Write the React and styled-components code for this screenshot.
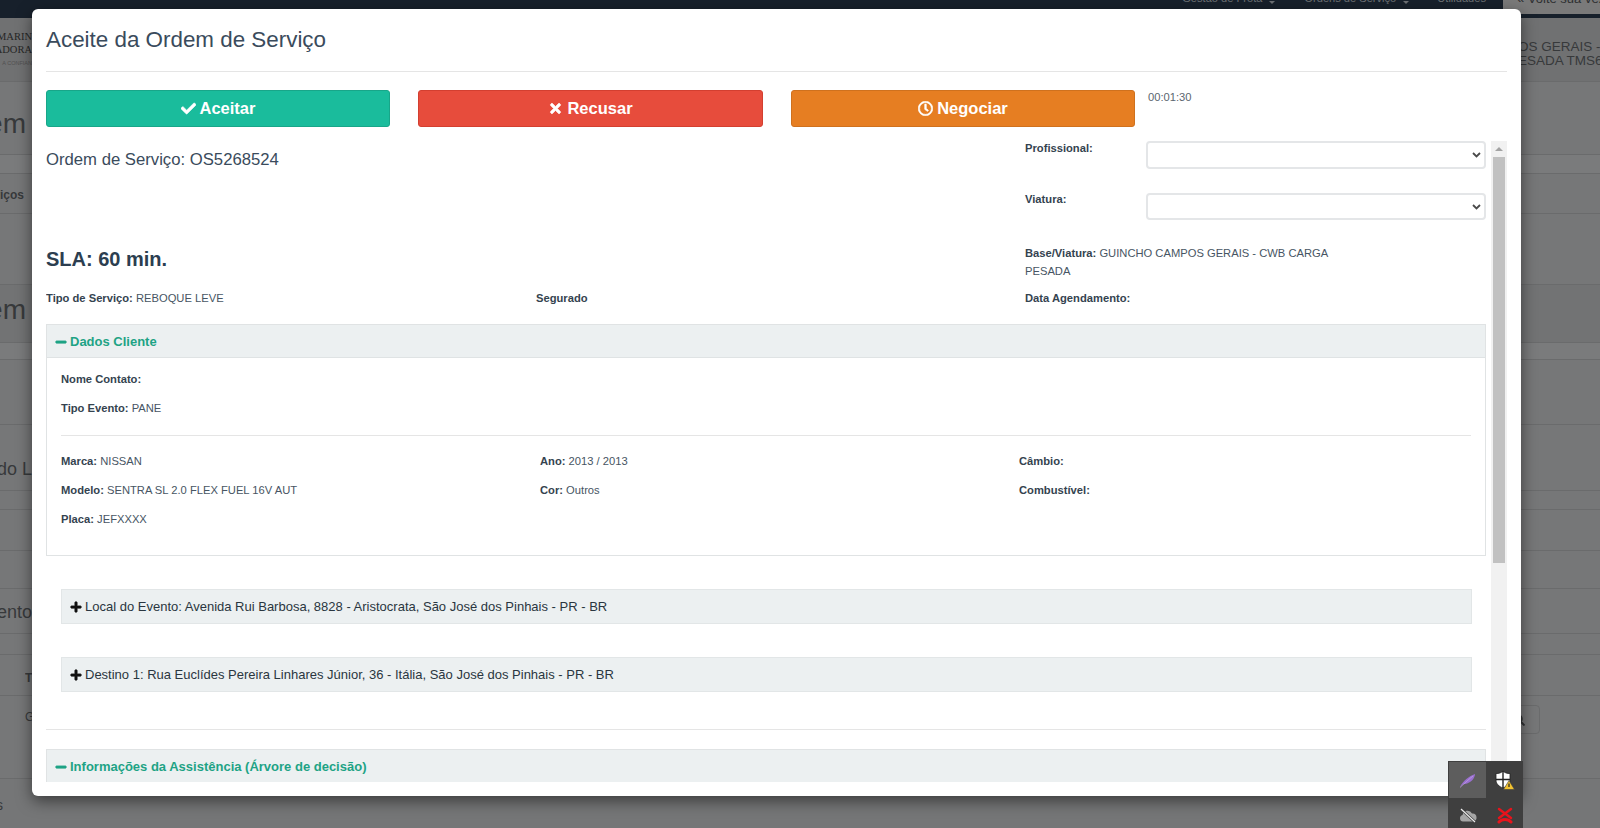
import React from "react";
import styled, { createGlobalStyle } from "styled-components";
import { FaCheck, FaTimes, FaRegClock, FaMinus, FaPlus, FaSearch } from "react-icons/fa";

const Global = createGlobalStyle`
  html, body { margin: 0; padding: 0; height: 100%; overflow: hidden; }
  body { font-family: "Liberation Sans", Arial, sans-serif; background: #767778; }
  * { box-sizing: border-box; }
`;

const Page = styled.div`
  position: relative;
  width: 1600px;
  height: 828px;
  overflow: hidden;
  background: #767778;
  color: #37393b;
`;

const NavBar = styled.div`
  height: 18px;
  background: #17202b;
  display: flex;
  justify-content: flex-end;
  overflow: hidden;
`;
const NavItem = styled.span`
  font-size: 11.1px;
  line-height: 16px;
  margin-top: -10px;
  margin-right: ${(p) => p.$gap}px;
  color: #6d7074;
  white-space: nowrap;
`;
const NavCaret = styled.i`
  display: inline-block;
  margin-left: 7px;
  vertical-align: -2px;
  border-top: 3px solid #6d7074;
  border-left: 3px solid transparent;
  border-right: 3px solid transparent;
`;
const NavTab = styled.span`
  width: 97px;
  height: 14px;
  background: #7a7a7a;
  color: #2d2f31;
  font-size: 13px;
  line-height: 16px;
  padding-left: 14px;
  white-space: nowrap;
  overflow: hidden;
  span { display: block; margin-top: -9px; }
`;

const BgRow = styled.div`
  height: ${(p) => p.$h}px;
  background: ${(p) => p.$bg || "#767778"};
  border-bottom: 1px solid ${(p) => p.$line || "#6a6b6c"};
  display: flex;
  justify-content: space-between;
  overflow: hidden;
`;
const BgLeft = styled.div`
  width: 32px;
  flex: none;
  display: flex;
  justify-content: flex-end;
  overflow: hidden;
  padding-top: ${(p) => p.$top || 0}px;
  padding-right: ${(p) => p.$right || 0}px;
  font-size: ${(p) => p.$size || 13}px;
  font-weight: ${(p) => (p.$bold ? 700 : 400)};
  line-height: 1.2;
  white-space: nowrap;
`;
const BgRight = styled.div`
  width: 82px;
  flex: none;
  overflow: hidden;
  white-space: nowrap;
  padding-top: ${(p) => p.$top || 0}px;
  font-size: 13.5px;
  line-height: 14px;
`;
const Logo = styled.div`
  font-family: "Liberation Serif", serif;
  font-size: 10.5px;
  line-height: 13px;
  color: #262626;
  white-space: nowrap;
  text-align: right;
  small { display: block; font-family: "Liberation Sans", sans-serif; font-size: 5.5px; line-height: 15px; color: #505050; }
`;
const BgSearch = styled.div`
  width: 36px;
  height: 29px;
  margin: 9px 0 0 -14px;
  border: 1px solid #6a6b6c;
  border-radius: 4px;
  display: flex;
  align-items: center;
  justify-content: flex-end;
  padding-right: 14px;
  font-size: 12px;
  color: #2f3133;
`;
const BgCell = styled.span`
  width: 7px;
  overflow: hidden;
`;

const Modal = styled.div`
  position: absolute;
  left: 32px;
  top: 9px;
  width: 1489px;
  height: 787px;
  background: #fff;
  border-radius: 6px;
  box-shadow: 0 5px 15px rgba(0, 0, 0, 0.5);
  padding: 0 14px;
  color: #2c3e50;
  overflow: hidden;
`;
const TitleBar = styled.div`
  height: 63px;
  border-bottom: 1px solid #e5e5e5;
  display: flex;
  align-items: center;
`;
const Title = styled.h4`
  margin: 0;
  font-size: 22.4px;
  font-weight: 400;
  color: #3a4b5c;
`;
const Actions = styled.div`
  display: grid;
  grid-template-columns: 344px 345px 344px 1fr;
  column-gap: 28px;
  padding-top: 18px;
  height: 55px;
`;
const ActionButton = styled.button`
  height: 37px;
  border: 1px solid ${(p) => p.$border};
  border-radius: 3px;
  background: ${(p) => p.$bg};
  color: #fff;
  font: 700 16.5px "Liberation Sans", Arial, sans-serif;
  display: flex;
  align-items: center;
  justify-content: center;
  gap: 4px;
  padding: 0;
  svg { font-size: 15px; stroke: currentColor; stroke-width: 20px; }
`;
const Timer = styled.div`
  font-size: 11.2px;
  line-height: 14px;
  color: #5b6670;
  margin: 0 0 0 -15px;
`;

const ScrollArea = styled.div`
  margin-top: 14px;
  height: 641px;
  display: flex;
`;
const ScrollContent = styled.div`
  flex: 1;
  min-width: 0;
  overflow: hidden;
  padding-right: 5px;
  font-size: 11.2px;
  line-height: 18px;
  color: #475563;
  b { color: #34434f; }
`;
const ScrollTrack = styled.div`
  width: 16px;
  flex: none;
  background: #f1f1f1;
  padding: 0 2px;
`;
const ScrollUp = styled.div`
  height: 16px;
  display: flex;
  align-items: center;
  justify-content: center;
  &::before {
    content: "";
    border-left: 4px solid transparent;
    border-right: 4px solid transparent;
    border-bottom: 4px solid #a3a3a3;
  }
`;
const ScrollThumb = styled.div`
  height: 406px;
  background: #c1c1c1;
`;

const TopGrid = styled.div`
  display: grid;
  grid-template-columns: 490px 489px 1fr;
`;
const OrderTitle = styled.div`
  font-size: 16.7px;
  line-height: 38px;
  color: #3a4b5c;
`;
const Sla = styled.div`
  margin-top: 62px;
  font-size: 20px;
  font-weight: 700;
  line-height: 36px;
  color: #2c3e50;
`;
const RightColumn = styled.div`
  grid-column: 3;
`;
const FieldRow = styled.div`
  display: flex;
  height: ${(p) => p.$h}px;
  margin-bottom: ${(p) => p.$mb}px;
`;
const FieldLabel = styled.label`
  width: 121px;
  font-weight: 700;
  line-height: ${(p) => p.$lh}px;
  color: #34434f;
`;
const SelectWrap = styled.div`
  position: relative;
  width: 340px;
  height: 100%;
  svg { position: absolute; right: 5px; top: 50%; margin-top: -3px; pointer-events: none; }
`;
const Select = styled.select`
  display: block;
  appearance: none;
  width: 100%;
  height: 100%;
  border: 2px solid #e4e6e8;
  border-radius: 4px;
  background: #fff;
  font-size: 13px;
`;
const BaseText = styled.div`
  width: 320px;
  margin-top: 24px;
`;
const InfoGrid = styled.div`
  display: grid;
  grid-template-columns: 490px 489px 1fr;
  margin-top: 9px;
`;
const Panel = styled.section`
  margin-top: ${(p) => p.$mt}px;
  border: 1px solid #e0e3e4;
  border-bottom-width: ${(p) => (p.$open ? 1 : 0)}px;
`;
const PanelHead = styled.div`
  height: 33px;
  background: #ecf0f1;
  border-bottom: 1px solid #dfe3e4;
  padding: 1px 0 0 8px;
  display: flex;
  align-items: center;
  gap: 3px;
  font-size: 13px;
  font-weight: 700;
  color: #1ea385;
  svg { font-size: 12px; stroke: currentColor; stroke-width: 30px; }
`;
const PanelBody = styled.div`
  padding: 12px 14px 27px 14px;
`;
const Line = styled.p`
  margin: 0 0 ${(p) => p.$mb ?? 11}px;
  height: 18px;
`;
const Divider = styled.hr`
  border: 0;
  border-top: 1px solid #e5e5e5;
  margin: ${(p) => p.$mt}px 0 ${(p) => p.$mb}px;
`;
const Columns = styled.div`
  display: grid;
  grid-template-columns: repeat(3, 479px);
`;
const Address = styled.div`
  margin: ${(p) => p.$mt}px 14px 0 15px;
  height: 35px;
  background: #ecf0f1;
  border: 1px solid #e2e6e7;
  padding: 1px 0 0 8px;
  display: flex;
  align-items: center;
  gap: 3px;
  font-size: 13px;
  color: #2a3640;
  svg { font-size: 12px; color: #111; stroke: currentColor; stroke-width: 30px; }
`;

const Flyout = styled.div`
  position: absolute;
  left: 1448px;
  top: 761px;
  width: 75px;
  height: 67px;
  background: #3f3f3f;
  display: grid;
  grid-template-columns: 37px 37px;
  grid-auto-rows: 36px;
  padding: 1px 0 0 1px;
`;
const Tile = styled.div`
  display: flex;
  align-items: center;
  justify-content: center;
  background: ${(p) => (p.$active ? "#5d5d5d" : "transparent")};
`;

const Kv = ({ k, v }) => (
  <Line>
    <b>{k}</b> {v}
  </Line>
);

const Chevron = () => (
  <svg width="9" height="6" viewBox="0 0 9 6">
    <path d="M1 1l3.500 3.500L8 1" fill="none" stroke="#4a4a4a" strokeWidth="1.8" />
  </svg>
);

export default function App() {
  return (
    <Page>
      <Global />
      <NavBar>
        <NavItem $gap={29}>
          Gestão de Frota
          <NavCaret />
        </NavItem>
        <NavItem $gap={28}>
          Ordens de Serviço
          <NavCaret />
        </NavItem>
        <NavItem $gap={17}>Utilidades</NavItem>
        <NavTab>
          <span>« Volte sua vez</span>
        </NavTab>
      </NavBar>
      <BgRow $h={64} $bg="#707172">
        <BgLeft $top={12}>
          <Logo>
            MARIN
            <br />
            ADORA
            <small>A CONFIAN</small>
          </Logo>
        </BgLeft>
        <BgRight $top={22}>
          OS GERAIS -
          <br />
          ESADA TMS63
        </BgRight>
      </BgRow>
      <BgRow $h={73}>
        <BgLeft $top={25} $right={6} $size={28}>em</BgLeft>
      </BgRow>
      <BgRow $h={19} $bg="#7a7b7c" />
      <BgRow $h={40}>
        <BgLeft $top={14} $right={8} $size={12} $bold>viços</BgLeft>
      </BgRow>
      <BgRow $h={71} />
      <BgRow $h={58} $bg="#727374">
        <BgLeft $top={8} $right={6} $size={28}>em</BgLeft>
      </BgRow>
      <BgRow $h={17} $bg="#7a7b7c" />
      <BgRow $h={65} />
      <BgRow $h={66}>
        <BgLeft $top={34} $right={0} $size={18}>do L</BgLeft>
      </BgRow>
      <BgRow $h={19} />
      <BgRow $h={41} />
      <BgRow $h={38} />
      <BgRow $h={45}>
        <BgLeft $top={13} $right={0} $size={18}>ento</BgLeft>
      </BgRow>
      <BgRow $h={21} />
      <BgRow $h={41}>
        <BgLeft $top={16} $right={0} $size={12} $bold>
          <BgCell>T</BgCell>
        </BgLeft>
      </BgRow>
      <BgRow $h={83}>
        <BgLeft $top={14} $right={0} $size={12}>
          <BgCell>G</BgCell>
        </BgLeft>
        <BgRight>
          <BgSearch>
            <FaSearch />
          </BgSearch>
        </BgRight>
      </BgRow>
      <BgRow $h={49} $line="transparent" $bg="#757677">
        <BgLeft $top={18} $right={29} $size={14}>s</BgLeft>
      </BgRow>

      <Modal>
        <TitleBar>
          <Title>Aceite da Ordem de Serviço</Title>
        </TitleBar>
        <Actions>
          <ActionButton $bg="#1abc9c" $border="#18a689">
            <FaCheck /> Aceitar
          </ActionButton>
          <ActionButton $bg="#e74c3c" $border="#d33f30">
            <FaTimes /> Recusar
          </ActionButton>
          <ActionButton $bg="#e67e22" $border="#cf711e">
            <FaRegClock /> Negociar
          </ActionButton>
          <Timer>00:01:30</Timer>
        </Actions>
        <ScrollArea>
          <ScrollContent>
            <TopGrid>
              <div>
                <OrderTitle>Ordem de Serviço: OS5268524</OrderTitle>
                <Sla>SLA: 60 min.</Sla>
              </div>
              <RightColumn>
                <FieldRow $h={28} $mb={24}>
                  <FieldLabel $lh={14}>Profissional:</FieldLabel>
                  <SelectWrap>
                    <Select aria-label="Profissional" />
                    <Chevron />
                  </SelectWrap>
                </FieldRow>
                <FieldRow $h={27} $mb={0}>
                  <FieldLabel $lh={12}>Viatura:</FieldLabel>
                  <SelectWrap>
                    <Select aria-label="Viatura" />
                    <Chevron />
                  </SelectWrap>
                </FieldRow>
                <BaseText>
                  <b>Base/Viatura:</b> GUINCHO CAMPOS GERAIS - CWB CARGA PESADA
                </BaseText>
              </RightColumn>
            </TopGrid>
            <InfoGrid>
              <div>
                <b>Tipo de Serviço:</b> REBOQUE LEVE
              </div>
              <div>
                <b>Segurado</b>
              </div>
              <div>
                <b>Data Agendamento:</b>
              </div>
            </InfoGrid>
            <Panel $mt={17} $open>
              <PanelHead>
                <FaMinus /> Dados Cliente
              </PanelHead>
              <PanelBody>
                <Kv k="Nome Contato:" />
                <Line $mb={0}>
                  <b>Tipo Evento:</b> PANE
                </Line>
                <Divider $mt={18} $mb={16} />
                <Columns>
                  <div>
                    <Kv k="Marca:" v="NISSAN" />
                    <Kv k="Modelo:" v="SENTRA SL 2.0 FLEX FUEL 16V AUT" />
                    <Line $mb={0}>
                      <b>Placa:</b> JEFXXXX
                    </Line>
                  </div>
                  <div>
                    <Kv k="Ano:" v="2013 / 2013" />
                    <Kv k="Cor:" v="Outros" />
                  </div>
                  <div>
                    <Kv k="Câmbio:" />
                    <Kv k="Combustível:" />
                  </div>
                </Columns>
              </PanelBody>
            </Panel>
            <Address $mt={33}>
              <FaPlus /> Local do Evento: Avenida Rui Barbosa, 8828 - Aristocrata, São José dos Pinhais - PR - BR
            </Address>
            <Address $mt={33}>
              <FaPlus /> Destino 1: Rua Euclídes Pereira Linhares Júnior, 36 - Itália, São José dos Pinhais - PR - BR
            </Address>
            <Divider $mt={37} $mb={0} />
            <Panel $mt={19}>
              <PanelHead>
                <FaMinus /> Informações da Assistência (Árvore de decisão)
              </PanelHead>
            </Panel>
          </ScrollContent>
          <ScrollTrack>
            <ScrollUp />
            <ScrollThumb />
          </ScrollTrack>
        </ScrollArea>
      </Modal>

      <Flyout>
        <Tile $active>
          <svg width="17" height="15" viewBox="0 0 17 15">
            <path d="M1 14C4 8 10 3 16 1c0 4-4 9-10 10-2 .3-3 1-5 3z" fill="#9a6fd0" />
            <path d="M1 14.500C6 10 10 6 14 3" stroke="#c9aee8" strokeWidth="0.6" fill="none" />
          </svg>
        </Tile>
        <Tile>
          <svg width="20" height="20" viewBox="0 0 20 20">
            <path d="M8 1c2 2 4 2.500 7 2.500V10c0 4-3 6.500-7 8-4-1.500-7-4-7-8V3.500C4 3.500 6 3 8 1z" fill="#fff" stroke="#222" strokeWidth="0.8" />
            <path d="M8 1v17M1 9.500h14" stroke="#222" strokeWidth="1.4" />
            <path d="M14 10.500l5.500 9h-11z" fill="#f2c230" stroke="#3f3f3f" strokeWidth="0.6" />
            <path d="M14 13.500v3.500" stroke="#222" strokeWidth="1.2" />
          </svg>
        </Tile>
        <Tile>
          <svg width="18" height="16" viewBox="0 0 18 16">
            <path d="M4 13.500a3.300 3.300 0 0 1-.4-6.500A5 5 0 0 1 13 5.500a4 4 0 0 1 1 8z" fill="#a6a6a6" />
            <path d="M2 1l14 13" stroke="#3f3f3f" strokeWidth="2.600" />
            <path d="M2 1l14 13" stroke="#ececec" strokeWidth="1.200" />
          </svg>
        </Tile>
        <Tile>
          <svg width="16" height="18" viewBox="0 0 16 18">
            <path d="M2 2l12 9M14 2L2 11" stroke="#e8141c" strokeWidth="2.500" strokeLinecap="round" />
            <path d="M2 15c3-3.500 9-3.500 12 0" stroke="#e8141c" strokeWidth="3" fill="none" strokeLinecap="round" />
          </svg>
        </Tile>
      </Flyout>
    </Page>
  );
}
